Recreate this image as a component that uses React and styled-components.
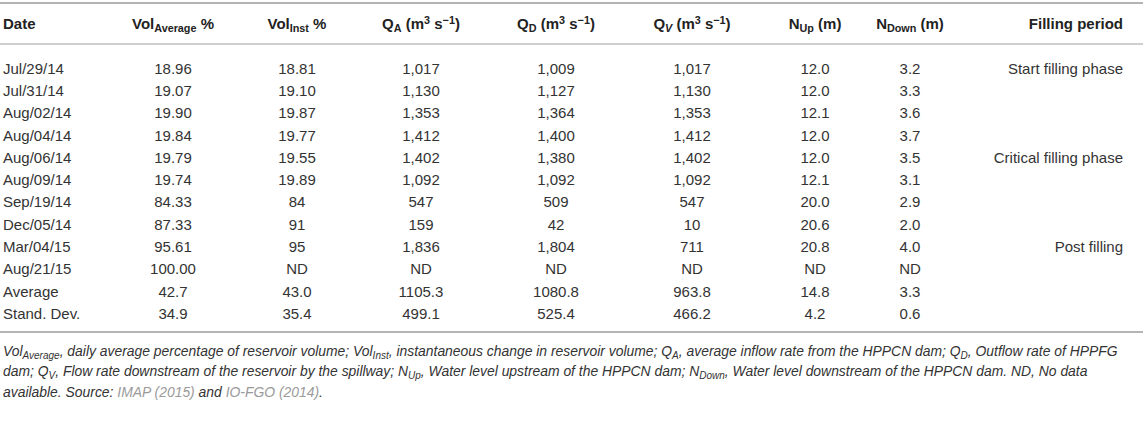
import styled, { createGlobalStyle } from 'styled-components';

const GlobalStyle = createGlobalStyle`
  body {
    margin: 0;
    background: #ffffff;
    font-family: "Liberation Sans", Arial, sans-serif;
  }
`;

const rows = [
  ['Jul/29/14', '18.96', '18.81', '1,017', '1,009', '1,017', '12.0', '3.2', 'Start filling phase'],
  ['Jul/31/14', '19.07', '19.10', '1,130', '1,127', '1,130', '12.0', '3.3', ''],
  ['Aug/02/14', '19.90', '19.87', '1,353', '1,364', '1,353', '12.1', '3.6', ''],
  ['Aug/04/14', '19.84', '19.77', '1,412', '1,400', '1,412', '12.0', '3.7', ''],
  ['Aug/06/14', '19.79', '19.55', '1,402', '1,380', '1,402', '12.0', '3.5', 'Critical filling phase'],
  ['Aug/09/14', '19.74', '19.89', '1,092', '1,092', '1,092', '12.1', '3.1', ''],
  ['Sep/19/14', '84.33', '84', '547', '509', '547', '20.0', '2.9', ''],
  ['Dec/05/14', '87.33', '91', '159', '42', '10', '20.6', '2.0', ''],
  ['Mar/04/15', '95.61', '95', '1,836', '1,804', '711', '20.8', '4.0', 'Post filling'],
  ['Aug/21/15', '100.00', 'ND', 'ND', 'ND', 'ND', 'ND', 'ND', ''],
  ['Average', '42.7', '43.0', '1105.3', '1080.8', '963.8', '14.8', '3.3', ''],
  ['Stand. Dev.', '34.9', '35.4', '499.1', '525.4', '466.2', '4.2', '0.6', ''],
];

const widths = [110, 126, 122, 126, 144, 128, 118, 72, 197];

const Page = styled.div`
  width: 1143px;
  padding-top: 2px;
`;

const Table = styled.table`
  width: 1143px;
  table-layout: fixed;
  border-collapse: collapse;
  color: #333333;
  font-size: 15px;
  border-top: 2px solid #b4b4b4;
  border-bottom: 2px solid #b4b4b4;
`;

const HeadRow = styled.tr`
  border-bottom: 2px solid #cfcfcf;
`;

const Th = styled.th`
  height: 39px;
  padding: 0;
  font-weight: bold;
  color: #222222;
  text-align: ${(p) => p.$align || 'center'};
  padding-left: ${(p) => (p.$align === 'left' ? '3px' : '0')};
  padding-right: ${(p) => (p.$align === 'right' ? '20px' : '0')};
  white-space: nowrap;
`;

const Td = styled.td`
  height: 22.3px;
  padding: 0;
  padding-top: ${(p) => (p.$first ? '12px' : '0')};
  padding-bottom: ${(p) => (p.$last ? '6px' : '0')};
  text-align: ${(p) => p.$align || 'center'};
  padding-left: ${(p) => (p.$align === 'left' ? '3px' : '0')};
  padding-right: ${(p) => (p.$align === 'right' ? '20px' : '0')};
  white-space: nowrap;
`;

const Sub = styled.sub`
  font-size: 0.72em;
  line-height: 0;
  vertical-align: -0.3em;
  font-style: ${(p) => (p.$italic ? 'italic' : 'normal')};
`;

const Sup = styled.sup`
  font-size: 0.72em;
  line-height: 0;
  vertical-align: 0.45em;
`;

const Caption = styled.p`
  margin: 8px 0 0 3px;
  font-size: 13.9px;
  line-height: 20.5px;
  font-style: italic;
  color: #333333;
  white-space: nowrap;
`;

const CapSub = styled.sub`
  font-size: 0.72em;
  line-height: 0;
  vertical-align: -0.3em;
`;

const Ref = styled.span`
  color: #9a9a9a;
`;

const Unit = () => (
  <>
    (m<Sup>3</Sup> s<Sup>−1</Sup>)
  </>
);

const alignFor = (i) => (i === 0 ? 'left' : i === 8 ? 'right' : 'center');

export default function App() {
  return (
    <Page>
      <GlobalStyle />
      <Table>
        <colgroup>
          {widths.map((w, i) => (
            <col key={i} style={{ width: w }} />
          ))}
        </colgroup>
        <thead>
          <HeadRow>
            <Th $align="left">Date</Th>
            <Th>
              Vol<Sub>Average</Sub> %
            </Th>
            <Th>
              Vol<Sub>Inst</Sub> %
            </Th>
            <Th>
              Q<Sub>A</Sub> <Unit />
            </Th>
            <Th>
              Q<Sub>D</Sub> <Unit />
            </Th>
            <Th>
              Q<Sub $italic>V</Sub> <Unit />
            </Th>
            <Th>
              N<Sub>Up</Sub> (m)
            </Th>
            <Th>
              N<Sub>Down</Sub> (m)
            </Th>
            <Th $align="right">Filling period</Th>
          </HeadRow>
        </thead>
        <tbody>
          {rows.map((r, ri) => (
            <tr key={ri}>
              {r.map((c, ci) => (
                <Td
                  key={ci}
                  $align={alignFor(ci)}
                  $first={ri === 0}
                  $last={ri === rows.length - 1}
                >
                  {c}
                </Td>
              ))}
            </tr>
          ))}
        </tbody>
      </Table>
      <Caption>
        Vol<CapSub>Average</CapSub>, daily average percentage of reservoir volume; Vol<CapSub>Inst</CapSub>,
        instantaneous change in reservoir volume; Q<CapSub>A</CapSub>, average inflow rate from the HPPCN dam;
        Q<CapSub>D</CapSub>, Outflow rate of HPPFG
        <br />
        dam; Q<CapSub>V</CapSub>, Flow rate downstream of the reservoir by the spillway; N<CapSub>Up</CapSub>,
        Water level upstream of the HPPCN dam; N<CapSub>Down</CapSub>, Water level downstream of the HPPCN dam. ND,
        No data
        <br />
        available. Source: <Ref>IMAP (2015)</Ref> and <Ref>IO-FGO (2014)</Ref>.
      </Caption>
    </Page>
  );
}
